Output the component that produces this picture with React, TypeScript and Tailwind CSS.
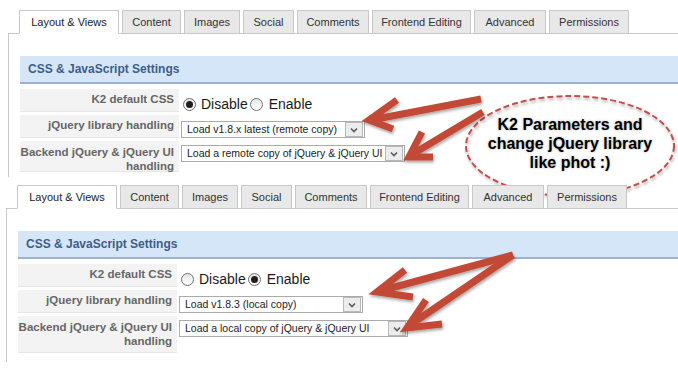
import React from 'react';

const font = "font-['Liberation_Sans',Arial,sans-serif]";

// tab widths taken from the screenshot
const tabs = [
  { label: 'Layout & Views', w: 'w-[100px]' },
  { label: 'Content', w: 'w-[59px]' },
  { label: 'Images', w: 'w-[56px]' },
  { label: 'Social', w: 'w-[51px]' },
  { label: 'Comments', w: 'w-[72px]' },
  { label: 'Frontend Editing', w: 'w-[99px]' },
  { label: 'Advanced', w: 'w-[72px]' },
  { label: 'Permissions', w: 'w-[80px]' },
];

const Radio = ({ checked }: { checked?: boolean }) => (
  <span className="w-[13px] h-[13px] rounded-full border border-[#707070] bg-gradient-to-b from-[#e6e6e6] to-white flex items-center justify-center shrink-0">
    {checked && <span className="w-[7px] h-[7px] rounded-full bg-[#1e1e1e]" />}
  </span>
);

const Select = ({ text, w }: { text: string; w: string }) => (
  <div className={`${w} h-[17px] border border-[#ababab] bg-white flex items-center`}>
    <span className="pl-[5px] text-[10.5px] text-[#222] whitespace-nowrap overflow-hidden flex-1">{text}</span>
    <span className="w-[18px] h-[15px] mr-px bg-[#ececec] border border-[#b9b9b9] flex items-center justify-center">
      <svg width="8" height="6" viewBox="0 0 8 6">
        <polyline points="1,1.5 4,4.5 7,1.5" fill="none" stroke="#5a5a5a" strokeWidth="1.6" />
      </svg>
    </span>
  </div>
);

interface PanelProps {
  left: string;
  border: string;
  bodyH: string;
  enabled: boolean;
  sel1: string;
  sel1W: string;
  sel2: string;
  sel2W: string;
  lastH: string;
}

const Panel = ({ left, border, bodyH, enabled, sel1, sel1W, sel2, sel2W, lastH }: PanelProps) => (
  <div className="flex flex-col">
    {/* Tabs */}
    <div className={`flex gap-[3px] relative z-10 -mb-px ${left}`}>
      {tabs.map((t, i) => (
        <div
          key={t.label}
          className={`${t.w} h-[24px] border border-[#c8c8c8] flex items-center justify-center text-[11px] ${
            i === 0 ? 'bg-white border-b-white text-[#222]' : 'bg-[#e8e8e8] text-[#333]'
          }`}
        >
          {t.label}
        </div>
      ))}
    </div>
    {/* Body */}
    <div className={`${border} ${bodyH} border-t border-l border-[#c8c8c8] pl-[11px] pt-[22px] overflow-hidden`}>
      <div className="h-[28px] bg-[#d5e6f9] border-b-2 border-[#9bb2cf] flex items-center pl-[8px] text-[12px] font-bold text-[#3e5d86]">
        CSS &amp; JavaScript Settings
      </div>
      <div className="flex flex-col gap-[3px] mt-[5px]">
        <div className="flex gap-[2px] h-[23px]">
          <div className="w-[159px] bg-[#f3f3f3] border-b border-[#e6e6e6] flex items-center justify-end pr-[5px] text-[11.5px] font-bold text-[#666]">
            K2 default CSS
          </div>
          <div className="flex items-center pt-[8px] pl-[2px] self-start leading-[14px] text-[14px] text-[#1a1a1a]">
            <Radio checked={!enabled} />
            <span className="ml-[5px]">Disable</span>
            <span className="ml-[2px]">
              <Radio checked={enabled} />
            </span>
            <span className="ml-[6px]">Enable</span>
          </div>
        </div>
        <div className="flex gap-[2px] h-[23px]">
          <div className="w-[159px] bg-[#f3f3f3] border-b border-[#e6e6e6] flex items-center justify-end pr-[5px] text-[11.5px] font-bold text-[#666]">
            jQuery library handling
          </div>
          <div className="pt-[6px]">
            <Select text={sel1} w={sel1W} />
          </div>
        </div>
        <div className={`flex gap-[2px] ${lastH}`}>
          <div className="w-[159px] bg-[#f3f3f3] border-b border-[#e6e6e6] pt-[4px] pr-[5px] text-right leading-[14px] text-[11.5px] font-bold text-[#666]">
            Backend jQuery &amp; jQuery UI
            <br />
            handling
          </div>
          <div className="pt-[4px]">
            <Select text={sel2} w={sel2W} />
          </div>
        </div>
      </div>
    </div>
  </div>
);

const App: React.FC = () => {
  return (
    <div className={`relative w-[678px] h-[369px] overflow-hidden bg-white ${font}`}>
      <div className="flex flex-col gap-[8px] pt-[10px]">
        <Panel
          left="ml-[19px]"
          border="ml-[8px]"
          bodyH="h-[144px]"
          enabled={false}
          sel1="Load v1.8.x latest (remote copy)"
          sel1W="w-[184px]"
          sel2="Load a remote copy of jQuery & jQuery UI"
          sel2W="w-[224px]"
          lastH="h-[31px]"
        />
        <Panel
          left="ml-[17px]"
          border="ml-[6px]"
          bodyH="h-[154px]"
          enabled={true}
          sel1="Load v1.8.3 (local copy)"
          sel1W="w-[184px]"
          sel2="Load a local copy of jQuery & jQuery UI"
          sel2W="w-[229px]"
          lastH="h-[37px]"
        />
      </div>

      {/* annotation layer: arrows and callout */}
      <svg className="absolute left-0 top-0 pointer-events-none" width="678" height="369" viewBox="0 0 678 369">
        <defs>
          <filter id="sh" x="-20%" y="-20%" width="140%" height="140%">
            <feDropShadow dx="1" dy="2" stdDeviation="1.6" floodColor="#000" floodOpacity="0.35" />
          </filter>
        </defs>
        <ellipse cx="570" cy="146" rx="104" ry="50" fill="none" stroke="#c0504d" strokeWidth="2" strokeDasharray="6 3" filter="url(#sh)" />
        <g fill="none" stroke="#c24a34" strokeWidth="7" strokeLinejoin="miter" filter="url(#sh)">
          <line x1="481" y1="99" x2="371" y2="120" />
          <polyline points="397,100 369,120 393,129" />
          <line x1="483" y1="112" x2="411" y2="155" />
          <polyline points="422,132 409,157 433,157" />
          <line x1="513" y1="255" x2="380" y2="291" />
          <polyline points="405,270 377,292 413,297" />
          <line x1="513" y1="255" x2="410" y2="325" />
          <polyline points="426,300 407,328 442,324" />
        </g>
      </svg>
      <div className="absolute left-[470px] top-[115px] w-[200px] text-center font-bold text-[16px] leading-[19px] text-black [text-shadow:0_0_3px_rgba(0,0,0,0.3)]">
        K2 Parameters and
        <br />
        change jQuery library
        <br />
        like phot :)
      </div>
    </div>
  );
};

export default App;
